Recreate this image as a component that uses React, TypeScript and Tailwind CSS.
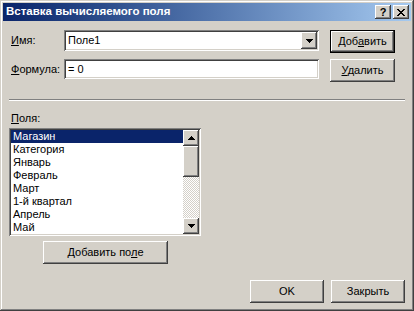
import React from 'react';

const raised =
  'shadow-[inset_-1px_-1px_#404040,inset_1px_1px_#ffffff,inset_-2px_-2px_#808080,inset_2px_2px_#d4d0c8]';
const sunken =
  'shadow-[inset_1px_1px_#808080,inset_-1px_-1px_#ffffff,inset_2px_2px_#404040,inset_-2px_-2px_#d4d0c8]';

const ArrowDown = () => (
  <svg width="7" height="4" viewBox="0 0 7 4" shapeRendering="crispEdges">
    <path d="M0 0h7v1H0zM1 1h5v1H1zM2 2h3v1H2zM3 3h1v1H3z" fill="#000" />
  </svg>
);

const ArrowUp = () => (
  <svg width="7" height="4" viewBox="0 0 7 4" shapeRendering="crispEdges">
    <path d="M3 0h1v1H3zM2 1h3v1H2zM1 2h5v1H1zM0 3h7v1H0z" fill="#000" />
  </svg>
);

const CloseGlyph = () => (
  <svg width="8" height="7" viewBox="0 0 8 7" shapeRendering="crispEdges">
    <path
      d="M0 0h2v1H0zM6 0h2v1H6zM1 1h2v1H1zM5 1h2v1H5zM2 2h4v1H2zM3 3h2v1H3zM2 4h4v1H2zM1 5h2v1H1zM5 5h2v1H5zM0 6h2v1H0zM6 6h2v1H6z"
      fill="#000"
    />
  </svg>
);

const Button = ({
  children,
  className = '',
  isDefault = false,
}: {
  children: React.ReactNode;
  className?: string;
  isDefault?: boolean;
}) => (
  <div className={`h-[23px] bg-[#d4d0c8] ${isDefault ? 'border border-black' : ''} ${className}`}>
    <div className={`h-full w-full flex items-center justify-center ${raised}`}>{children}</div>
  </div>
);

const fields = ['Магазин', 'Категория', 'Январь', 'Февраль', 'Март', '1-й квартал', 'Апрель', 'Май'];

export default function App() {
  return (
    <div
      className="w-[414px] h-[311px] bg-[#d4d0c8] p-[3px] text-[11px] text-black font-['Liberation_Sans',Arial,sans-serif] shadow-[inset_-1px_-1px_#404040,inset_1px_1px_#d4d0c8,inset_-2px_-2px_#808080,inset_2px_2px_#ffffff]"
    >
      {/* title bar */}
      <div className="h-[18px] flex items-center pl-[3px] pr-[2px] bg-linear-to-r from-[#0a246a] to-[#a6caf0]">
        <span className="flex-1 font-bold text-white text-[11.5px] leading-none">Вставка вычисляемого поля</span>
        <div className={`w-[16px] h-[14px] bg-[#d4d0c8] flex items-center justify-center ${raised}`}>
          <span className="font-bold text-[11px] leading-none">?</span>
        </div>
        <div className={`ml-[2px] w-[16px] h-[14px] bg-[#d4d0c8] flex items-center justify-center ${raised}`}>
          <CloseGlyph />
        </div>
      </div>

      <div className="pl-[6px] pr-[6px] pt-[9px]">
        {/* name row */}
        <div className="flex h-[23px]">
          <div className="w-[55px] pl-[2px] leading-[21px]">
            <span className="underline">И</span>мя:
          </div>
          <div className={`w-[255px] h-[21px] bg-white p-[2px] flex ${sunken}`}>
            <div className="flex-1 pl-[2px] leading-[17px]">Поле1</div>
            <div className={`w-[16px] h-[17px] bg-[#d4d0c8] flex items-center justify-center ${raised}`}>
              <ArrowDown />
            </div>
          </div>
          <Button isDefault className="ml-[11px] w-[65px]">
            <span>
              Доб<span className="underline">а</span>вить
            </span>
          </Button>
        </div>

        {/* formula row */}
        <div className="flex h-[23px] mt-[6px]">
          <div className="w-[55px] pl-[2px] leading-[20px]">
            <span className="underline">Ф</span>ормула:
          </div>
          <div className={`w-[255px] h-[20px] bg-white pl-[4px] leading-[20px] ${sunken}`}>= 0</div>
          <Button className="ml-[11px] w-[65px]">
            <span>
              <span className="underline">У</span>далить
            </span>
          </Button>
        </div>

        {/* separator */}
        <div className="mt-[17px] h-[2px] border-t border-t-[#808080] border-b border-b-white" />

        <div className="mt-[11px] pl-[2px] leading-[13px]">
          <span className="underline">П</span>оля:
        </div>

        {/* list box */}
        <div className={`mt-[3px] w-[192px] h-[108px] bg-white p-[2px] flex ${sunken}`}>
          <div className="flex-1 flex flex-col">
            {fields.map((f, i) => (
              <div
                key={f}
                className={`h-[13px] leading-[13px] pl-[2px] ${i === 0 ? 'bg-[#0a246a] text-white' : ''}`}
              >
                {f}
              </div>
            ))}
          </div>
          <div className="w-[16px] flex flex-col">
            <div className={`h-[16px] bg-[#d4d0c8] flex items-center justify-center ${raised}`}>
              <ArrowUp />
            </div>
            <div className={`h-[31px] bg-[#d4d0c8] ${raised}`} />
            <div className="flex-1 bg-[repeating-conic-gradient(#ffffff_0%_25%,#d4d0c8_0%_50%)] bg-[length:2px_2px]" />
            <div className={`h-[16px] bg-[#d4d0c8] flex items-center justify-center ${raised}`}>
              <ArrowDown />
            </div>
          </div>
        </div>

        <Button className="mt-[5px] ml-[34px] w-[125px]">
          <span>
            Добавить по<span className="underline">л</span>е
          </span>
        </Button>

        {/* dialog buttons */}
        <div className="mt-[16px] flex justify-end gap-[7px]">
          <Button className="w-[74px]">OK</Button>
          <Button className="w-[74px]">Закрыть</Button>
        </div>
      </div>
    </div>
  );
}
